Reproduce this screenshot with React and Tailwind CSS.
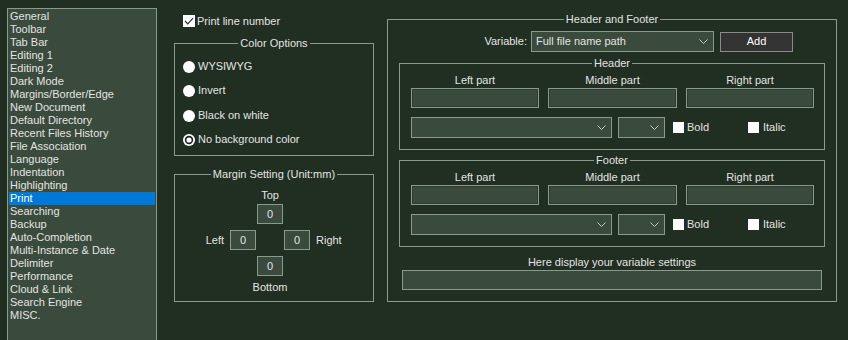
import React from "react";

const items = [
  "General", "Toolbar", "Tab Bar", "Editing 1", "Editing 2", "Dark Mode",
  "Margins/Border/Edge", "New Document", "Default Directory", "Recent Files History",
  "File Association", "Language", "Indentation", "Highlighting", "Print", "Searching",
  "Backup", "Auto-Completion", "Multi-Instance & Date", "Delimiter", "Performance",
  "Cloud & Link", "Search Engine", "MISC.",
];

function Chevron() {
  return (
    <svg width="9" height="5" viewBox="0 0 9 5" className="shrink-0">
      <path d="M0.5 0.5 L4.5 4.5 L8.5 0.5" fill="none" stroke="#c4c8c4" strokeWidth="1" />
    </svg>
  );
}

function Combo({ className, text }) {
  return (
    <div className={"flex items-center justify-between border border-[#8a9a8a] bg-[#3a4a3c] pl-[4px] pr-[5px] " + className}>
      <span className="leading-[13px] whitespace-nowrap">{text}</span>
      <Chevron />
    </div>
  );
}

function Edit({ className }) {
  return <div className={"border border-[#8a9a8a] bg-[#3a4a3c] shadow-[inset_0_0_0_1px_#2e3b30] " + className} />;
}

function Group({ title, className, children }) {
  return (
    <div className={"flex flex-col border border-[#8a9a8a] " + className}>
      <div className="-mt-[7px] flex h-[13px] justify-center">
        <span className="bg-[#212e22] px-[2px] leading-[13px] whitespace-nowrap">{title}</span>
      </div>
      {children}
    </div>
  );
}

function WhiteBox() {
  return <div className="h-[11px] w-[11px] shrink-0 bg-white" />;
}

function Radio({ label, checked }) {
  return (
    <div className="flex h-[13px] items-center pl-[8px]">
      <svg width="12" height="12" viewBox="0 0 12 12" className="shrink-0">
        <circle cx="6" cy="6" r="6" fill="#ffffff" />
        {checked && <circle cx="6" cy="6" r="3.4" fill="none" stroke="#202020" strokeWidth="1.6" />}
      </svg>
      <span className="ml-[3px] leading-[13px] whitespace-nowrap">{label}</span>
    </div>
  );
}

function PartGroup({ title, className }) {
  return (
    <Group title={title} className={"ml-[11px] h-[87px] w-[426px] " + className}>
      <div className="mt-[4px] flex gap-[9px] pl-[11px]">
        <div className="flex w-[128px] justify-center leading-[13px] whitespace-nowrap">Left part</div>
        <div className="flex w-[129px] justify-center leading-[13px] whitespace-nowrap">Middle part</div>
        <div className="flex w-[128px] justify-center leading-[13px] whitespace-nowrap">Right part</div>
      </div>
      <div className="mt-[1px] flex gap-[9px] pl-[11px]">
        <Edit className="h-[20px] w-[128px]" />
        <Edit className="h-[20px] w-[129px]" />
        <Edit className="h-[20px] w-[128px]" />
      </div>
      <div className="mt-[9px] flex items-center pl-[11px]">
        <Combo className="h-[21px] w-[201px]" text="" />
        <Combo className="ml-[6px] h-[21px] w-[47px]" text="" />
        <div className="ml-[8px] flex w-[75px] items-center">
          <WhiteBox />
          <span className="ml-[3px] leading-[13px]">Bold</span>
        </div>
        <div className="flex items-center">
          <WhiteBox />
          <span className="ml-[4px] leading-[13px]">Italic</span>
        </div>
      </div>
    </Group>
  );
}

export default function App() {
  return (
    <div className="flex h-[340px] w-[848px] overflow-hidden bg-[#212e22] font-['Liberation_Sans',Arial,sans-serif] text-[11px] text-[#e2e4e2]">
      {/* Left list */}
      <div className="ml-[7px] mt-[8px] h-[360px] w-[150px] shrink-0 border border-[#8a9a8a] bg-[#3a4a3c] p-[1px]">
        {items.map((it) => (
          <div
            key={it}
            className={
              "h-[13px] pl-[1px] leading-[13px] whitespace-nowrap " +
              (it === "Print" ? "bg-[#0078d7] text-white" : "")
            }
          >
            {it}
          </div>
        ))}
      </div>

      {/* Middle column */}
      <div className="ml-[17px] flex w-[200px] shrink-0 flex-col">
        <div className="mt-[15px] flex h-[12px] items-center pl-[9px]">
          <div className="flex h-[12px] w-[12px] shrink-0 items-center justify-center bg-white">
            <svg width="10" height="8" viewBox="0 0 10 8">
              <path d="M1 4 L3.8 6.8 L9 1.2" fill="none" stroke="#303030" strokeWidth="1.2" />
            </svg>
          </div>
          <span className="ml-[2px] leading-[12px] whitespace-nowrap">Print line number</span>
        </div>

        <Group title="Color Options" className="mt-[16px] h-[113px] w-[200px]">
          <div className="mt-[10px]"><Radio label="WYSIWYG" /></div>
          <div className="mt-[11px]"><Radio label="Invert" /></div>
          <div className="mt-[12px]"><Radio label="Black on white" /></div>
          <div className="mt-[11px]"><Radio label="No background color" checked /></div>
        </Group>

        <Group title="Margin Setting (Unit:mm)" className="mt-[18px] h-[128px] w-[200px]">
          <div className="ml-[82px] mt-[8px] flex w-[26px] justify-center leading-[13px] whitespace-nowrap">Top</div>
          <div className="ml-[82px] mt-[2px] flex h-[20px] w-[26px] items-center justify-center border border-[#8a9a8a] bg-[#3a4a3c]">0</div>
          <div className="mt-[6px] flex items-center">
            <div className="w-[49px] text-right leading-[13px]">Left</div>
            <div className="ml-[6px] flex h-[20px] w-[26px] items-center justify-center border border-[#8a9a8a] bg-[#3a4a3c]">0</div>
            <div className="ml-[28px] flex h-[20px] w-[26px] items-center justify-center border border-[#8a9a8a] bg-[#3a4a3c]">0</div>
            <div className="ml-[6px] leading-[13px]">Right</div>
          </div>
          <div className="ml-[82px] mt-[6px] flex h-[20px] w-[26px] items-center justify-center border border-[#8a9a8a] bg-[#3a4a3c]">0</div>
          <div className="ml-[82px] mt-[5px] flex w-[26px] justify-center leading-[13px] whitespace-nowrap">Bottom</div>
        </Group>
      </div>

      {/* Right column */}
      <div className="ml-[13px] flex shrink-0 flex-col">
        <Group title="Header and Footer" className="mt-[19px] h-[283px] w-[450px]">
          <div className="mt-[5px] flex items-center">
            <div className="w-[139px] text-right leading-[13px]">Variable:</div>
            <Combo className="ml-[4px] h-[21px] w-[183px]" text="Full file name path" />
            <div className="ml-[6px] flex h-[20px] w-[73px] items-center justify-center border border-[#8a8a8a] bg-[#333333] text-white">Add</div>
          </div>
          <PartGroup title="Header" className="mt-[11px]" />
          <PartGroup title="Footer" className="mt-[10px]" />
          <div className="mt-[9px] flex justify-center leading-[13px] whitespace-nowrap">Here display your variable settings</div>
          <Edit className="ml-[14px] mt-[1px] h-[20px] w-[420px] shadow-none" />
        </Group>
      </div>
    </div>
  );
}
